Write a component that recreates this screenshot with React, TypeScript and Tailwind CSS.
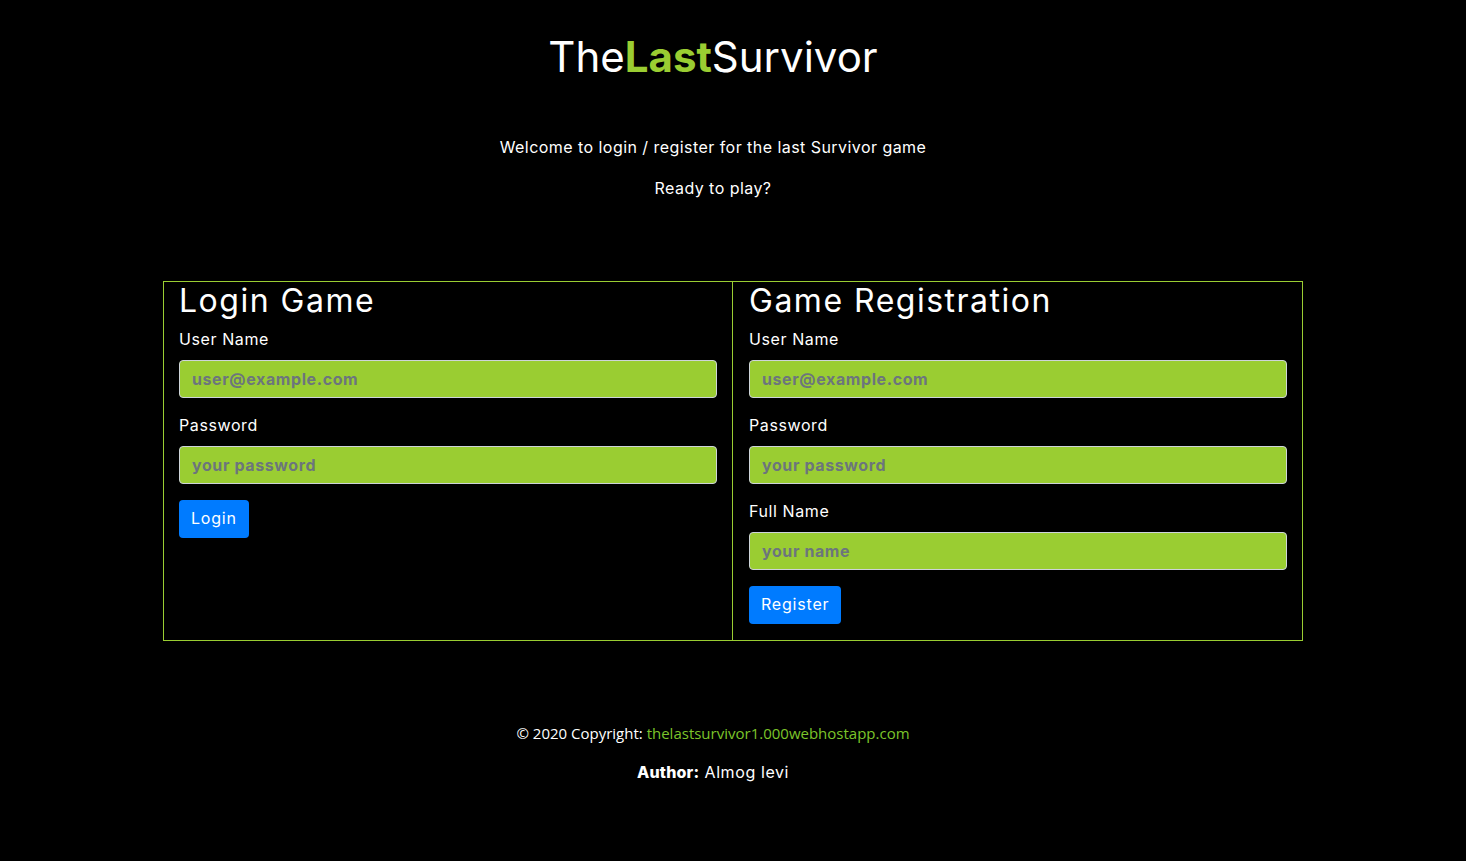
import React from "react";

const F = { fontFamily: "Inter, 'DejaVu Sans', sans-serif" };

function Field({ label, placeholder, type = "text" }: { label: string; placeholder: string; type?: string }) {
  return (
    <div className="mb-4">
      <label className="block mb-[10px] text-[16px] leading-[22px] text-white tracking-[0.6px]">{label}</label>
      <input
        type={type}
        placeholder={placeholder}
        className="block w-full h-[38px] px-3 rounded-[4px] border border-[#ced4da] bg-[#9acd32] text-[16px] font-bold tracking-[0.6px] text-[#495057] placeholder:text-[#6c757d] outline-none"
      />
    </div>
  );
}

export default function App() {
  return (
    <div className="min-h-[861px] w-full bg-black text-white" style={F}>
      <div className="pr-[40px] text-center">
        <h1 className="pt-[30px] text-[42px] leading-[54px] font-normal">
          The<span className="font-bold text-[#9acd32]">Last</span>Survivor
        </h1>
        <p className="mt-[51px] text-[16px] leading-6 tracking-[0.45px]">Welcome to login / register for the last Survivor game</p>
        <p className="mt-[17px] text-[16px] leading-6 tracking-[0.45px]">Ready to play?</p>
      </div>

      <div className="mx-auto mt-[81px] w-[1140px] border border-[#9acd32] grid grid-cols-2">
        <div className="px-[15px] border-r border-[#9acd32]">
          <h2 className="text-[32px] leading-[38px] mb-2 tracking-[1.5px]">Login Game</h2>
          <Field label="User Name" placeholder="user@example.com" />
          <Field label="Password" placeholder="your password" type="password" />
          <button className="h-[38px] px-3 rounded-[4px] bg-[#007bff] text-white text-[16px] leading-[22px] pb-[2px] tracking-[0.8px]">Login</button>
        </div>
        <div className="pl-[16px] pr-[15px] pb-4">
          <h2 className="text-[32px] leading-[38px] mb-2 tracking-[1.5px]">Game Registration</h2>
          <Field label="User Name" placeholder="user@example.com" />
          <Field label="Password" placeholder="your password" type="password" />
          <Field label="Full Name" placeholder="your name" />
          <button className="h-[38px] px-3 rounded-[4px] bg-[#007bff] text-white text-[16px] leading-[22px] pb-[2px] tracking-[0.8px]">Register</button>
        </div>
      </div>

      <footer className="mt-[80px] pr-[40px] text-center">
        <p className="text-[15px] leading-6" style={{ fontFamily: "'Open Sans', sans-serif" }}>
          © 2020 Copyright: <a className="text-[#7cc42a]">thelastsurvivor1.000webhostapp.com</a>
        </p>
        <p className="mt-[15px] text-[16px] leading-6 tracking-[0.6px]">
          <b className="font-extrabold tracking-[0.2px]">Author:</b> Almog levi
        </p>
      </footer>
    </div>
  );
}
